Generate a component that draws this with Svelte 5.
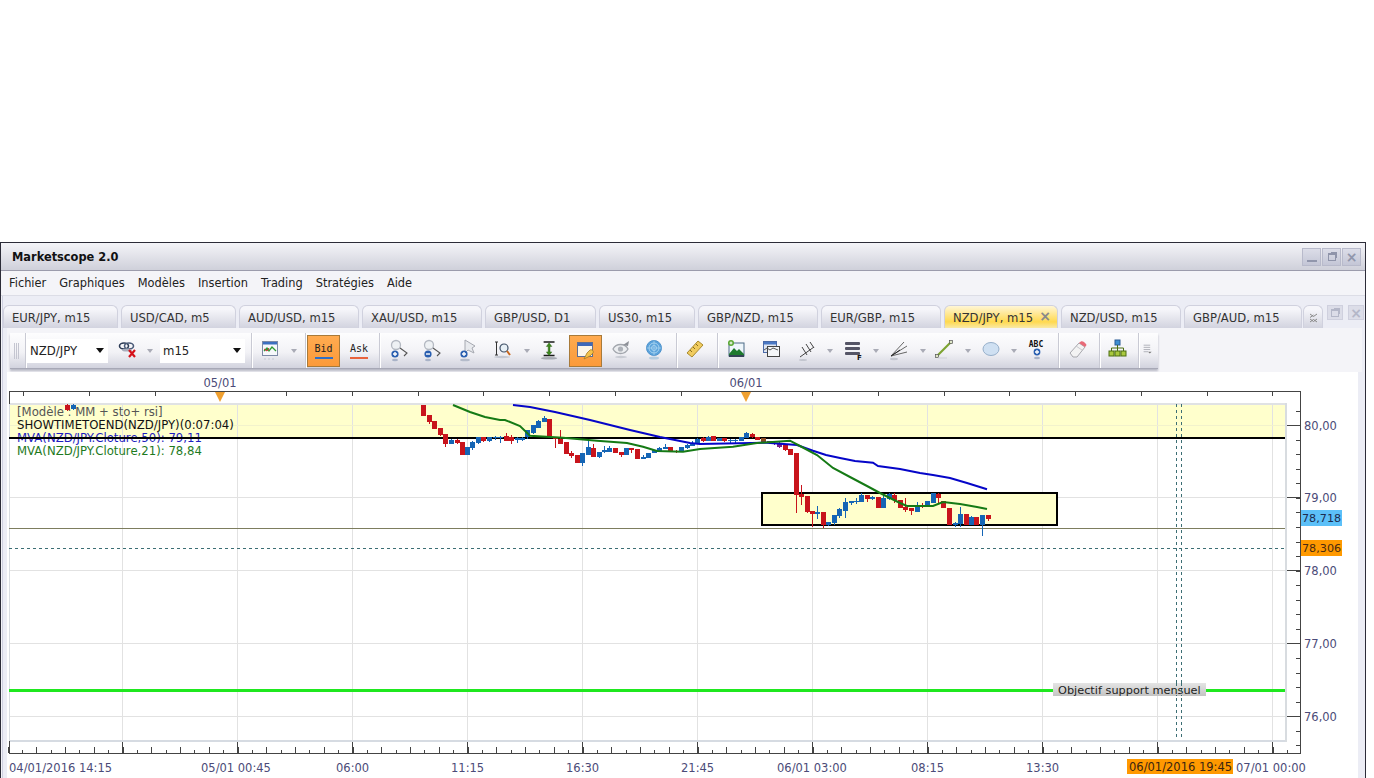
<script>
  const menus = ['Fichier', 'Graphiques', 'Modèles', 'Insertion', 'Trading', 'Stratégies', 'Aide'];
  const tabs = [
    ['EUR/JPY, m15', 115], ['USD/CAD, m5', 115], ['AUD/USD, m15', 120], ['XAU/USD, m15', 120], ['GBP/USD, D1', 111], ['US30, m15', 96],
    ['GBP/NZD, m15', 120], ['EUR/GBP, m15', 120], ['NZD/JPY, m15', 114], ['NZD/USD, m15', 120], ['GBP/AUD, m15', 118]
  ];

  const mag = (sign) => `<circle cx="7" cy="6" r="4.500" fill="#eef1f4" stroke="#b4b9c2" stroke-width="1.300"/><path d="M11 9l7 5-3 3" fill="none" stroke="#555" stroke-width="1.100"/><circle cx="6" cy="15" r="3.600" fill="#2a5fb0"/><path d="${sign}" stroke="#fff" stroke-width="1.400"/><ellipse cx="6" cy="21" rx="3" ry="1.200" fill="#a9b3c8"/>`;
  const icons = {
    link: `<ellipse cx="6" cy="7" rx="4.500" ry="3" fill="none" stroke="#2b3a55" stroke-width="1.600"/><ellipse cx="11" cy="7" rx="4.500" ry="3" fill="none" stroke="#4a5a78" stroke-width="1.600"/><ellipse cx="9" cy="11" rx="5" ry="1.600" fill="#a8aebc"/><path d="M11 11l6 7m0-7l-6 7" stroke="#d5121a" stroke-width="2.200"/>`,
    chart: `<rect x="2.500" y="2.500" width="15" height="14" fill="#f6f8fb" stroke="#7d8aa6"/><rect x="3" y="3" width="14" height="2.500" fill="#3c6fc0"/><path d="M4 12l3-3 2 3 3-4 4 4" fill="none" stroke="#2f9a33" stroke-width="1.300"/><path d="M4 10l3 2 2-3" fill="none" stroke="#c62b2b"/><path d="M4 20h12" stroke="#c5c8d4" stroke-dasharray="2 2"/>`,
    zin: mag('M4 15h4M6 13v4'),
    zout: mag('M4 15h4'),
    cursor: `<path d="M7 1v13l3-3 6 3-2-5 3-2z" fill="#e8eaee" stroke="#a5a8b0"/><circle cx="6" cy="15" r="3.600" fill="#2a5fb0"/><path d="M4 15h4M6 13v4" stroke="#fff" stroke-width="1.400"/><ellipse cx="7" cy="21" rx="5" ry="1.300" fill="#b4bbca"/>`,
    zarea: `<path d="M3 3h3M4.500 3v13M3 16h3" stroke="#333" fill="none"/><circle cx="12" cy="9" r="4" fill="#e8f0f6" stroke="#3f5066" stroke-width="1.200"/><path d="M15 12l3 4" stroke="#c9681f" stroke-width="2"/><ellipse cx="10" cy="18" rx="8" ry="1.200" fill="#c4c8d2"/>`,
    fit: `<path d="M4 2h12M4 17h12" stroke="#1a1a1a" stroke-width="1.600"/><path d="M10 3l-3 4h2v6H7l3 4 3-4h-2V7h2z" fill="#3d8a1e" stroke="#2a5a12" stroke-width=".5"/><ellipse cx="10" cy="20" rx="9" ry="1.400" fill="#a6a9b2"/>`,
    note: `<rect x="2.500" y="2.500" width="15" height="14" fill="#fdf6e8" stroke="#5f6d92"/><rect x="3" y="3" width="14" height="3" fill="#3f68b8"/><path d="M9 19l3-6 3-3c2-1 4 1 3 3l-3 3z" fill="#f4c34c" stroke="#a87a1e" stroke-width=".8"/>`,
    eye: `<path d="M2 10c3-6 12-6 15 0-3 6-12 6-15 0z" fill="#eceef1" stroke="#a2a6ad" stroke-width="1.300"/><circle cx="9.500" cy="10" r="2.600" fill="#aeb2b9"/><path d="M12 6l6-4-1 5z" fill="#8d9097"/><ellipse cx="10" cy="18" rx="6" ry="1.200" fill="#c8cbd3"/>`,
    globe: `<circle cx="10" cy="9" r="7.500" fill="#5ba3dc" stroke="#4f93cc"/><circle cx="10" cy="9" r="5" fill="none" stroke="#a7d3ef"/><circle cx="10" cy="9" r="2.500" fill="none" stroke="#a7d3ef"/><path d="M2.500 9h15M10 1.500v15" stroke="#a7d3ef" stroke-width=".7"/><ellipse cx="10" cy="19" rx="5" ry="1.500" fill="#b6cde0"/>`,
    ruler: `<path d="M2 14L13 2l5 4L7 18z" fill="#f0cb5e" stroke="#a98a2e"/><path d="M5 11l2 2M8 8l2 2M11 5l2 2" stroke="#8a6f1c"/>`,
    image: `<rect x="3" y="4" width="15" height="13" fill="#eef6fb" stroke="#4b6a86"/><path d="M3 15l5-6 3 3 2-2 5 5v2H3z" fill="#1e7a2e"/><rect x="3" y="16" width="15" height="2" fill="#345"/><circle cx="5" cy="4" r="3" fill="#5aa832"/><path d="M3.500 4h3M5 2.500v3" stroke="#fff"/>`,
    win: `<rect x="2.500" y="2.500" width="13" height="11" fill="#dfe6f2" stroke="#4a6aa8"/><rect x="3" y="3" width="12" height="2.500" fill="#4a78c4"/><rect x="6.500" y="7.500" width="12" height="10" fill="#f4f6f8" stroke="#444"/><path d="M3 11l3-2 3 2 3-2 5 2" fill="none" stroke="#555"/>`,
    fork: `<path d="M3 18L17 8M5 8l5 8M9 5l5 8M13 3l4 6" fill="none" stroke="#444" stroke-width="1"/><ellipse cx="6" cy="21" rx="4" ry="1" fill="#c3c6cf"/>`,
    fib: `<rect x="2" y="3" width="15" height="3" rx="1" fill="#556"/><rect x="2" y="8" width="15" height="3" rx="1" fill="#556"/><rect x="2" y="13" width="15" height="3" rx="1" fill="#556"/><text x="14" y="21" font-size="7" font-family="DejaVu Sans" font-weight="700" fill="#111">F</text>`,
    fan: `<path d="M2 17L15 3M2 17L18 7M2 17L18 13" fill="none" stroke="#666" stroke-width="1"/><path d="M2 17l9-6" stroke="#222"/><ellipse cx="5" cy="20" rx="4" ry="1.200" fill="#c3c6cf"/>`,
    line: `<path d="M3 17L17 3" stroke="#7da331" stroke-width="2.200"/><rect x="1.500" y="15.500" width="3" height="3" fill="#dfe7c8" stroke="#555" stroke-width=".7"/><rect x="15.500" y="1.500" width="3" height="3" fill="#dfe7c8" stroke="#555" stroke-width=".7"/><path d="M4 19h9" stroke="#cfd1d8"/>`,
    oval: `<ellipse cx="10" cy="10" rx="8" ry="6.500" fill="#cfe0f2" stroke="#96afca"/>`,
    abc: `<text x="10" y="8" text-anchor="middle" font-size="8" font-family="DejaVu Sans Mono" font-weight="700" fill="#111">ABC</text><circle cx="11" cy="13" r="3.400" fill="#2a5fb0"/><path d="M9 13h4M11 11v4" stroke="#fff" stroke-width="1.300"/><ellipse cx="11" cy="19" rx="3" ry="1.200" fill="#a9b3c8"/>`,
    eraser: `<path d="M2 14L11 4l6 4-8 10H5z" fill="#f3f3f3" stroke="#a7a7ad"/><path d="M11 4c2-2 3-2 5-1l2 2c1 1 0 2-1 3l-6-4z" fill="#e86a78"/><path d="M8 7l6 4" stroke="#c9c9ce"/>`,
    tree: `<rect x="7" y="1" width="5" height="5" fill="#3f8fd2" stroke="#2a5c96"/><path d="M9.500 6v3M3.500 12V9h12v3M9.500 9v3" stroke="#4c6e12" fill="none"/><rect x="1" y="12" width="5" height="5" fill="#a9c83e" stroke="#4c6e12"/><rect x="7" y="12" width="5" height="5" fill="#a9c83e" stroke="#4c6e12"/><rect x="13" y="12" width="5" height="5" fill="#a9c83e" stroke="#4c6e12"/>`,
    more: `<path d="M5 4h9M5 7h9M5 10h9M5 13h6" stroke="#9a9ca6"/><path d="M11 13h5l-2.500 2.500z" fill="#777"/>`
  };

  const tools = [
    { t: 'grip', w: 14 }, { t: 'sep', w: 3 }, { t: 'combo', w: 81, label: 'NZD/JPY' }, { t: 'gap', w: 8 },
    { t: 'icon', w: 26, i: 'link' }, { t: 'arrow', w: 16 }, { t: 'gap', w: 2 }, { t: 'combo', w: 85, label: 'm15' },
    { t: 'sep', w: 12 }, { t: 'icon', w: 28, i: 'chart' }, { t: 'arrow', w: 18 }, { t: 'sep', w: 4 },
    { t: 'bid', w: 33 }, { t: 'ask', w: 38 }, { t: 'sep', w: 2 }, { t: 'icon', w: 40, i: 'zin' }, { t: 'icon', w: 26, i: 'zout' },
    { t: 'icon', w: 46, i: 'cursor' }, { t: 'icon', w: 22, i: 'zarea' }, { t: 'arrow', w: 26 }, { t: 'icon', w: 20, i: 'fit' }, { t: 'gap', w: 9 },
    { t: 'active', w: 33, i: 'note' }, { t: 'icon', w: 40, i: 'eye' }, { t: 'icon', w: 26, i: 'globe' }, { t: 'sep', w: 16 },
    { t: 'icon', w: 24, i: 'ruler' }, { t: 'sep', w: 18 }, { t: 'icon', w: 22, i: 'image' }, { t: 'icon', w: 48, i: 'win' },
    { t: 'icon', w: 24, i: 'fork' }, { t: 'arrow', w: 20 }, { t: 'icon', w: 28, i: 'fib' }, { t: 'arrow', w: 16 },
    { t: 'icon', w: 32, i: 'fan' }, { t: 'arrow', w: 14 }, { t: 'icon', w: 30, i: 'line' }, { t: 'arrow', w: 16 },
    { t: 'icon', w: 32, i: 'oval' }, { t: 'arrow', w: 12 }, { t: 'icon', w: 34, i: 'abc' }, { t: 'sep', w: 8 },
    { t: 'icon', w: 34, i: 'eraser' }, { t: 'sep', w: 6 }, { t: 'icon', w: 34, i: 'tree' }, { t: 'sep', w: 4 }, { t: 'icon', w: 16, i: 'more' }
  ];

  const R = '#c8141c', B = '#1565b5', P = '#7a1f8a', W = '#8a4a20';
  // x, body top, body bottom, wick top, wick bottom, colour
  const candles = [
    [66.5,405,410,404,411,R],[72.5,405,409,404,410,B],
    [423,405,416,405,416,R],[428.7,415,422,415,424,R],[434,421,429,421,429,R],[440,428,435,428,436,R],[445,434,444,434,447,R],
    [451,440,444,439,444,B],[456.7,440,443,439,444,R],[462,442,455,442,455,R],[467,447,455,447,455,B],[472,442,448,441,450,B],
    [478,437,443,437,444,B],[483,437,441,437,442,R],[489,437,441,437,442,B],[494.7,437,438,436,440,B],[500,437,438,436,443,B],
    [505.7,436,441,433,441,R],[511,437,441,435,444,R],[516.7,438,440,437,443,B],[522,438,440,437,441,B],[527,430,437,430,439,B],
    [533,425,433,425,434,B],[538,421,428,420,428,B],[544,418,422,416,422,B],[549,419,436,419,436,R],[555,438,439,438,448,R],
    [560,439,444,430,444,R],[566,442,454,442,454,R],[571,453,456,451,458,R],[577,455,463,455,463,R],[582,453,463,453,466,B],
    [588,447,455,440,455,B],[593,448,457,444,457,R],[598.7,452,457,452,458,B],[604,450,452,446,453,B],[609,448,452,446,452,B],
    [615,448,453,448,453,R],[620.7,452,455,452,457,R],[626,448,455,448,455,B],[631,448,450,448,453,R],[637,449,459,449,459,R],
    [642.7,457,459,455,459,B],[648,453,458,453,458,B],[653.7,450,453,450,453,B],[659,448,451,447,451,B],[664.7,447,449,444,449,B],
    [670,447,452,447,452,R],[675.7,451,452,450,453,R],[681,447,452,447,452,B],[686.7,445,448,444,449,B],[692,443,446,441,446,B],
    [697,439,443,438,443,B],[702.7,438,441,437,442,R],[707.7,437,441,436,441,B],[713,436,441,436,441,R],[718.7,438,441,438,441,B],
    [724,438,441,438,442,R],[730,440,441,439,443,B],[735.3,440,441,439,443,B],[740.7,437,441,437,441,B],[746,433,438,432,438,B],
    [751.7,434,437,433,438,R],[757,437,440,437,440,R],[762.7,438,442,438,443,W],[768.5,441,443,441,444,P],[774,443,444,442,445,P],
    [779,443,447,442,448,P],[784.7,445,450,445,451,R],[790,449,455,449,455,R],[795.7,453,495,453,513,R],[801,494,497,485,505,R],
    [806.7,496,512,496,513,R],[812,511,514,511,527,R],[817.3,512,514,506,519,B],[823,512,525,512,528,R],[828,522,525,522,526,B],
    [834,515,523,515,525,B],[839,509,516,508,518,B],[845,502,511,498,518,B],[850.7,501,503,501,505,B],[856,501,502,498,504,B],
    [861,495,502,493,502,B],[866.7,495,499,495,502,R],[872,497,499,496,500,B],[877.7,497,508,497,508,R],[883,498,508,495,508,B],
    [889,494,499,493,500,B],[894,495,500,493,503,R],[900,500,508,500,508,R],[905,507,510,498,512,R],[910.7,508,511,508,515,R],
    [916.7,506,512,502,512,B],[922,505,507,503,508,R],[927,501,506,501,506,B],[932.7,493,503,493,503,B],[938,494,498,493,504,R],
    [943.3,501,508,501,508,R],[949,508,525,508,525,R],[954.7,523,525,522,527,B],[960,514,524,507,527,B],[965.7,514,525,514,525,R],
    [971,517,525,516,525,B],[976.3,517,525,517,525,R],[982,515,525,515,536,B],[987.7,515,519,515,521,R]
  ];

  const blue = '513,405 530,407 555,412 590,420 630,430 660,437 690,443 700,444 767,442.7 797,445 813,450.7 826,455 840,458 855,461 873,462.7 878,466 900,469 920,473 933,475 950,478 967,483 987,489.3';
  const green = '453,405 470,412 485,417 500,420 505,420 520,426 530,435.7 563,437.7 597,440.7 627,443 643,446.7 657,451 683,451.7 700,449 733,446.7 757,443 790,440.7 800,446 817,455 833,468 850,477 867,486 880,493 900,503 907,506 933,506 943,502 960,504 977,507 987,509';

  const vgrid = Array.from({ length: 11 }, (_, k) => 122 + 115 * k);
  const hgrid = [425, 497, 570, 643, 716];
  const yTicks = Array.from({ length: 24 }, (_, k) => 410.5 + 14.56 * k);
  const xTicks = [];
  for (let k = 0; 7.5 + 14.375 * k < 1300; k++) xTicks.push({ x: Math.round(7.5 + 14.375 * k), k });
  const topTicks = Array.from({ length: 20 }, (_, k) => Math.round(23 + 65.75 * k));
  const yLabels = [[425, '80,00'], [497, '79,00'], [570, '78,00'], [643, '77,00'], [716, '76,00']];
  const xLabels = [[9, '04/01/2016 14:15'], [201, '05/01 00:45'], [336, '06:00'], [451, '11:15'], [566, '16:30'], [681, '21:45'], [777, '06/01 03:00'], [911, '08:15'], [1026, '13:30'], [1236, '07/01 00:00']];
</script>

<div class="page">
  <div class="window">
    <header class="title">
      <strong>Marketscope 2.0</strong>
      <div class="winbtns">
        <span class="wb"><i class="min"></i></span>
        <span class="wb"><i class="res"></i></span>
        <span class="wb"><i class="cls">×</i></span>
      </div>
    </header>
    <nav class="menu">
      {#each menus as m}<span>{m}</span>{/each}
    </nav>
    <div class="body">
      <div class="tabs">
        {#each tabs as [t, w]}
          <div class="tab" class:on={t === 'NZD/JPY, m15'} style="width:{w}px">
            {t}{#if t === 'NZD/JPY, m15'}<b class="x">×</b>{/if}
          </div>
        {/each}
        <div class="tab chev">
          <svg width="9" height="10" viewBox="0 0 9 10"><path d="M1 1l3.500 2.500L8 1M1 4.500 4.500 2M1 6l3.500 2.500L8 6M1 9l3.500-2.500L8 9" fill="none" stroke="#888"/></svg>
        </div>
        <div class="tabctl">
          <span class="wb small"><i class="res"></i></span>
          <span class="wb small"><i class="cls">×</i></span>
        </div>
      </div>
      <div class="toolband">
        <div class="toolbar">
          {#each tools as x}
            <div class="cell" style="width:{x.w}px">
              {#if x.t === 'grip'}<span class="grip"></span>
              {:else if x.t === 'sep'}<span class="sep"></span>
              {:else if x.t === 'combo'}
                <div class="combo"><span>{x.label}</span><em></em></div>
              {:else if x.t === 'arrow'}<em class="arrow"></em>
              {:else if x.t === 'bid'}
                <div class="toggle active"><span class="pix">Bid</span><u class="ub"></u></div>
              {:else if x.t === 'ask'}
                <div class="toggle"><span class="pix">Ask</span><u class="ur"></u></div>
              {:else if x.t === 'active'}
                <div class="toggle active"><svg width="22" height="22" viewBox="0 0 22 22">{@html icons[x.i]}</svg></div>
              {:else if x.t === 'icon'}
                <svg width="22" height="24" viewBox="0 0 22 24">{@html icons[x.i]}</svg>
              {/if}
            </div>
          {/each}
        </div>
      </div>
      <svg class="chart" width="1351" height="406" viewBox="7 372 1351 406" shape-rendering="crispEdges">
        <rect x="7" y="372" width="1351" height="406" fill="#fff"/>
        <g font-family="DejaVu Sans, sans-serif" font-size="11.500" fill="#4b4b78" shape-rendering="auto">
          <text x="220" y="387" text-anchor="middle">05/01</text>
          <text x="746" y="387" text-anchor="middle">06/01</text>
        </g>

        <rect x="9" y="404" width="1276" height="34" fill="#ffffcc"/>
        {#each vgrid as x}<rect x={x} y="404" width="1" height="337" fill="#e2e2e2"/>{/each}
        {#each hgrid as y}<rect x="9" y={y} width="1276" height="1" fill={y === 425 ? '#f2f2cc' : '#e2e2e2'}/>{/each}
        <rect x="9" y="403" width="1278" height="2" fill="#e0e2e4"/>
        <rect x="9" y="740" width="1278" height="2" fill="#d6dbe2"/>
        <rect x="1285" y="403" width="2" height="339" fill="#d8dce0"/>
        <rect x="9" y="404" width="1" height="337" fill="#d8dce0"/>

        <rect x="762" y="493" width="295" height="32" fill="#ffffcc" stroke="#000" stroke-width="2"/>
        <rect x="9" y="528" width="1276" height="1" fill="#7d7d5e"/>
        <path d="M9 548.500H1285" stroke="#3c6e74" stroke-dasharray="3 3" fill="none"/>
        <path d="M1176.500 404V738M1181.500 404V738" stroke="#3c6e74" stroke-dasharray="3 3" fill="none"/>

        <g font-family="DejaVu Sans, sans-serif" font-size="11.700" shape-rendering="auto">
          <text x="17" y="416" fill="#555">[Modèle : MM + sto+ rsi]</text>
          <text x="17" y="429" fill="#111">SHOWTIMETOEND(NZD/JPY)(0:07:04)</text>
          <text x="17" y="442" fill="#1f1fc0">MVA(NZD/JPY.Cloture,50): 79,11</text>
          <text x="17" y="455" fill="#1e7a1e">MVA(NZD/JPY.Cloture,21): 78,84</text>
        </g>
        <rect x="9" y="437" width="1276" height="2" fill="#000"/>

        {#each candles as [x, t, b, wt, wb, c]}
          <rect x={Math.round(x)} y={wt} width="1" height={wb - wt} fill={c}/>
          <rect x={Math.round(x) - 2} y={t} width="5" height={Math.max(b - t, 1)} fill={c}/>
        {/each}

        <g fill="none" stroke-width="2" shape-rendering="auto">
          <polyline points={blue} stroke="#0505c8"/>
          <polyline points={green} stroke="#157a15"/>
        </g>

        <rect x="9" y="689" width="1276" height="3" fill="#1fe81f"/>
        <defs>
          <linearGradient id="lbl" x1="0" y1="0" x2="0" y2="1"><stop offset="0" stop-color="#e4e4e4"/><stop offset="1" stop-color="#c4c4c4"/></linearGradient>
        </defs>
        <rect x="1053" y="683" width="153" height="13" fill="url(#lbl)"/>
        <text x="1058" y="694" font-family="DejaVu Sans, sans-serif" font-size="11.300" fill="#222" shape-rendering="auto">Objectif support mensuel</text>
        <path d="M1176.500 683V696M1181.500 683V696" stroke="#3c6e74" stroke-dasharray="3 3" fill="none"/>

        <!-- axes -->
        <rect x="9" y="391" width="1291" height="1" fill="#444"/>
        <rect x="1300" y="391" width="1" height="363" fill="#444"/>
        <rect x="9" y="753" width="1292" height="1" fill="#444"/>
        <rect x="9" y="391" width="1" height="13" fill="#444"/>
        <rect x="9" y="741" width="1" height="12" fill="#444"/>
        {#each topTicks as x}{#if x < 1300}<rect x={x} y="392" width="1" height="4" fill="#444"/>{/if}{/each}
        {#each yTicks as y}<rect x="1296" y={Math.round(y)} width="4" height="1" fill="#444"/>{/each}
        {#each hgrid as y}<rect x="1287" y={y} width="13" height="1" fill="#444"/>{/each}
        {#each xTicks as t}
          <rect x={t.x} y={753 - (t.k % 2 === 0 ? 6 : 3)} width="1" height={t.k % 2 === 0 ? 6 : 3} fill="#444"/>
        {/each}
        {#each vgrid as x}<rect x={x} y="742" width="1" height="11" fill="#444"/>{/each}

        <path d="M215 392h10l-5 10z" fill="#f0a030" shape-rendering="auto"/>
        <path d="M741 392h10l-5 10z" fill="#f0a030" shape-rendering="auto"/>

        <rect x="1301" y="510" width="41" height="16" fill="#5cc0f8"/>
        <rect x="1301" y="540" width="41" height="16" fill="#ff9900"/>
        <rect x="1127" y="759" width="106" height="15" fill="#ff9900"/>

        <g font-family="DejaVu Sans, sans-serif" font-size="11.500" fill="#4b4b78" shape-rendering="auto">
          {#each yLabels as [y, s]}<text x="1304" y={y + 5}>{s}</text>{/each}
          {#each xLabels as [x, s]}<text x={x} y="772">{s}</text>{/each}
          <text x="1302" y="522" font-size="11.200" fill="#1c2c50">78,718</text>
          <text x="1302" y="552" font-size="11.200" fill="#4a2a10">78,306</text>
          <text x="1129" y="771" fill="#3a2410">06/01/2016 19:45</text>
        </g>
      </svg>
    </div>
  </div>
</div>

<style>
  :global(body) { margin: 0; background: #fff; }
  .page {
    width: 1374px; height: 778px; padding-top: 242px; box-sizing: border-box; overflow: hidden;
    font-family: "DejaVu Sans", sans-serif; font-size: 11px; color: #222;
  }
  .window {
    width: 1366px; box-sizing: border-box; display: flex; flex-direction: column;
    border: 1px solid #2c2c38; border-bottom: 0; background: #f3f4f8; height: 560px;
  }
  .title {
    height: 28px; flex: none; display: flex; align-items: center; justify-content: space-between; box-sizing: border-box;
    padding: 0 4px 0 11px; background: linear-gradient(#f4f4f8, #cfd0da); border-bottom: 1px solid #9c9cac;
  }
  .title strong { font-size: 11.400px; color: #111; }
  .winbtns { display: flex; gap: 1px; }
  .wb {
    width: 19px; height: 18px; box-sizing: border-box; display: flex; align-items: center; justify-content: center;
    background: linear-gradient(#dcdde8, #c4c6d6); border: 1px solid #b8bacb;
  }
  .wb.small { width: 16px; height: 15px; background: #dcdde8; border-color: #cfd0de; }
  .wb i { display: block; font-style: normal; }
  .min { width: 10px; height: 2px; margin-top: 8px; background: #9196ac; }
  .res { width: 8px; height: 8px; border: 1px solid #8f94aa; border-top-width: 2px; box-sizing: border-box; box-shadow: 2px -2px 0 -1px #8f94aa; }
  .cls { font-size: 14px; line-height: 14px; font-weight: 700; color: #9196ac; }
  .small .cls { color: #b4b7c8; }
  .small .res { border-color: #b4b7c8; box-shadow: 2px -2px 0 -1px #b4b7c8; }

  .menu {
    height: 25px; flex: none; display: flex; align-items: center; gap: 13px; padding-left: 8px;
    border-bottom: 1px solid #dcdde6; box-sizing: border-box; background: #f4f4f8; color: #222; font-size: 11.400px;
  }
  .body {
    flex: 1; min-height: 0; display: flex; flex-direction: column;
    border-left: 1px solid #cfd0e0; background: #ecedf5; margin-left: 1px;
  }
  .tabs { height: 23px; flex: none; margin-top: 9px; display: flex; gap: 3px; align-items: flex-end; }
  .tab {
    height: 23px; flex: none; box-sizing: border-box; padding: 5px 0 0 8px; position: relative; white-space: nowrap; font-size: 11.600px;
    background: linear-gradient(#f6f6fa 15%, #d2d3df); border: 1px solid #d0d1de; border-bottom: 0;
    border-radius: 6px 6px 0 0; color: #333;
  }
  .tab.on { background: linear-gradient(#fff6d6, #ffd94f 72%, #f9e9a6); }
  .x { position: absolute; right: 6px; top: 2px; font-size: 14px; color: #8a8a8a; }
  .chev { width: 20px; padding: 6px 0 0 5px; margin-left: -2px; }
  .tabctl { display: flex; gap: 5px; margin-left: 1px; align-self: flex-start; }

  .toolband {
    height: 44px; flex: none; width: 1355px; margin-left: 4px; background: #f4f4f8; box-sizing: border-box; padding: 5px 0 0 3px;
  }
  .toolbar {
    width: 1148px; height: 36px; box-sizing: border-box; display: flex; align-items: center;
    background: linear-gradient(#fdfdfe, #f2f2f6 55%, #d2d3de); box-shadow: 0 2px 2px #b6b7c4; border-bottom: 1px solid #a7a8b6;
  }
  .cell { height: 100%; flex: none; display: flex; align-items: center; justify-content: center; }
  .cell svg { display: block; }
  .grip { width: 6px; height: 16px; background: repeating-linear-gradient(90deg, #c4c5d0 0 1px, transparent 1px 2px); }
  .sep { width: 1px; height: 100%; background: #c9cad4; box-shadow: 1px 0 0 #fff; }
  .combo {
    width: 100%; height: 24px; background: #fff; display: flex; align-items: center; justify-content: space-between;
    box-sizing: border-box; padding: 0 4px 0 3px; color: #222; font-size: 11.700px;
  }
  .combo em { border: 4px solid transparent; border-top: 5px solid #111; border-bottom: 0; }
  .arrow { border: 3px solid transparent; border-top: 4px solid #a9abb6; border-bottom: 0; }
  .toggle { width: 100%; height: 32px; box-sizing: border-box; display: flex; flex-direction: column; align-items: center; justify-content: center; }
  .toggle.active { background: linear-gradient(#ffab50, #fb9a3a); border: 1px solid #a87a3a; }
  .pix { font-family: "DejaVu Sans Mono", monospace; font-size: 10px; line-height: 12px; color: #222; }
  .toggle u { display: block; width: 18px; height: 2px; margin-top: 2px; }
  .ub { background: #2f6fc6; }
  .ur { background: #e8633c; }
  .chart { display: block; flex: none; background: #fff; margin-left: 4px; }
</style>
